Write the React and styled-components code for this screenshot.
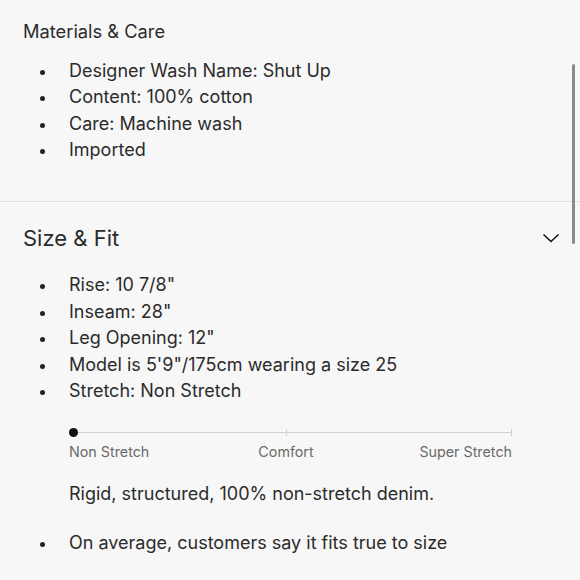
import React from "react";
import styled, { createGlobalStyle } from "styled-components";

const Global = createGlobalStyle`
  html, body { margin: 0; padding: 0; background: #f7f7f7; }
  body { font-family: Inter, "Open Sans", sans-serif; color: #2b2b2b; overflow: hidden; }
`;

const Page = styled.div`
  position: relative;
  width: 580px;
  height: 580px;
  overflow: hidden;
  background: #f7f7f7;
`;

const Section = styled.section`
  padding: ${(p) => p.$pad};
  border-bottom: ${(p) => (p.$divider ? "1px solid #dedede" : "none")};
`;

const Header = styled.div`
  display: flex;
  align-items: center;
  justify-content: space-between;
  padding-right: 20px;
`;

const Title = styled.h2`
  margin: 0;
  font-weight: 400;
  font-size: ${(p) => p.$size}px;
  line-height: 1.2;
  letter-spacing: 0;
`;

const List = styled.ul`
  list-style: none;
  margin: ${(p) => p.$margin || "0"};
  padding: 0;
`;

const Item = styled.li`
  position: relative;
  padding-left: 46px;
  font-size: 18px;
  line-height: 26.5px;
  letter-spacing: 0;
  &::before {
    content: "";
    position: absolute;
    left: 17px;
    top: 12px;
    width: 5px;
    height: 5px;
    border-radius: 50%;
    background: #222;
  }
`;

const Scale = styled.div`
  margin: 23px 0 0 46px;
  width: 443px;
`;

const Track = styled.div`
  position: relative;
  height: 9px;
`;

const Line = styled.div`
  position: absolute;
  left: 4px;
  right: 0;
  top: 4px;
  height: 1px;
  background: #cfcfcf;
`;

const Tick = styled.div`
  position: absolute;
  top: 1px;
  width: 1px;
  height: 7px;
  background: #cfcfcf;
  left: ${(p) => p.$left};
`;

const Dot = styled.div`
  position: absolute;
  left: 0;
  top: 0;
  width: 9px;
  height: 9px;
  border-radius: 50%;
  background: #111;
`;

const Labels = styled.div`
  display: grid;
  grid-template-columns: 217px 0 1fr;
  margin-top: 6px;
  font-size: 14.3px;
  color: #6a6a6a;
  line-height: 18px;
  white-space: nowrap;
`;

const Label = styled.span`
  justify-self: ${(p) => p.$justify};
`;

const Desc = styled.p`
  margin: 20px 0 0 46px;
  font-size: 18px;
  line-height: 26px;
`;

const Scrollbar = styled.div`
  position: absolute;
  right: 5px;
  top: 64px;
  width: 3px;
  height: 180px;
  border-radius: 2px;
  background: #8a8a8a;
`;

const Chevron = () => (
  <svg width="18" height="12" viewBox="0 0 18 12" fill="none">
    <path d="M1.5 2.5 L9 9.5 L16.5 2.5" stroke="#111" strokeWidth="1.5" />
  </svg>
);

export default function App() {
  return (
    <Page>
      <Global />
      <Section $pad="21px 0 37px 23px" $divider>
        <Title $size={18.3}>Materials &amp; Care</Title>
        <List $margin="15px 0 0 0">
          <Item>Designer Wash Name: Shut Up</Item>
          <Item>Content: 100% cotton</Item>
          <Item>Care: Machine wash</Item>
          <Item>Imported</Item>
        </List>
      </Section>
      <Section $pad="23px 0 0 23px">
        <Header>
          <Title $size={22}>Size &amp; Fit</Title>
          <Chevron />
        </Header>
        <List $margin="21px 0 0 0">
          <Item>Rise: 10 7/8"</Item>
          <Item>Inseam: 28"</Item>
          <Item>Leg Opening: 12"</Item>
          <Item>Model is 5'9"/175cm wearing a size 25</Item>
          <Item>Stretch: Non Stretch</Item>
        </List>
        <Scale>
          <Track>
            <Line />
            <Tick $left="217px" />
            <Tick $left="calc(100% - 1px)" />
            <Dot />
          </Track>
          <Labels>
            <Label $justify="start">Non Stretch</Label>
            <Label $justify="center">Comfort</Label>
            <Label $justify="end">Super Stretch</Label>
          </Labels>
        </Scale>
        <Desc>Rigid, structured, 100% non-stretch denim.</Desc>
        <List $margin="23px 0 0 0">
          <Item>On average, customers say it fits true to size</Item>
        </List>
      </Section>
      <Scrollbar />
    </Page>
  );
}
